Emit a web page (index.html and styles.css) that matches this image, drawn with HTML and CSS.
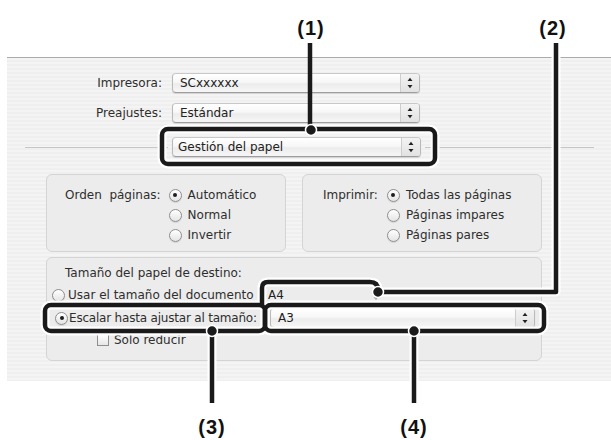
FILE: index.html
```html
<!DOCTYPE html>
<html lang="es">
<head>
<meta charset="utf-8">
<title>Gestión del papel</title>
<link rel="stylesheet" href="styles.css">
</head>
<body>
<div class="page">
  <div class="top-space"></div>
  <div class="panel">
    <div class="form-row">
      <span class="form-label">Impresora:</span>
      <div class="popup w248"><span class="popup-text">SCxxxxxx</span><span class="stepper"><svg width="6" height="12" viewBox="0 0 6 12"><path d="M0.5 4 L3 0.8 L5.5 4 Z M0.5 8 L5.5 8 L3 11.2 Z" fill="#222"/></svg></span></div>
    </div>
    <div class="form-row">
      <span class="form-label">Preajustes:</span>
      <div class="popup w248"><span class="popup-text">Estándar</span><span class="stepper"><svg width="6" height="12" viewBox="0 0 6 12"><path d="M0.5 4 L3 0.8 L5.5 4 Z M0.5 8 L5.5 8 L3 11.2 Z" fill="#222"/></svg></span></div>
    </div>
    <div class="sep-row">
      <span class="sep-line sep-left"></span>
      <div class="popup w249"><span class="popup-text tight">Gestión del papel</span><span class="stepper"><svg width="6" height="12" viewBox="0 0 6 12"><path d="M0.5 4 L3 0.8 L5.5 4 Z M0.5 8 L5.5 8 L3 11.2 Z" fill="#222"/></svg></span></div>
      <span class="sep-line sep-right"></span>
    </div>

    <div class="boxes">
      <div class="group grp-order">
        <span class="grp-label">Orden&nbsp; páginas:</span>
        <div class="opts">
          <div class="opt"><span class="radio on"></span><span>Automático</span></div>
          <div class="opt"><span class="radio"></span><span>Normal</span></div>
          <div class="opt"><span class="radio"></span><span>Invertir</span></div>
        </div>
      </div>
      <div class="group grp-print">
        <span class="grp-label">Imprimir:</span>
        <div class="opts">
          <div class="opt"><span class="radio on"></span><span>Todas las páginas</span></div>
          <div class="opt"><span class="radio"></span><span>Páginas impares</span></div>
          <div class="opt"><span class="radio"></span><span>Páginas pares</span></div>
        </div>
      </div>
    </div>

    <div class="group grp-size">
      <div class="size-title">Tamaño del papel de destino:</div>
      <div class="size-row row-usar">
        <span class="radio"></span>
        <span class="size-label lbl-usar">Usar el tamaño del documento</span>
        <div class="popup-flat"><span class="popup-text small">A4</span><span class="stepper faint"><svg width="6" height="12" viewBox="0 0 6 12"><path d="M0.5 4 L3 0.8 L5.5 4 Z M0.5 8 L5.5 8 L3 11.2 Z" fill="#aaa"/></svg></span></div>
      </div>
      <div class="size-row row-escalar">
        <span class="radio on"></span>
        <span class="size-label lbl-escalar">Escalar hasta ajustar al tamaño:</span>
        <div class="popup w265"><span class="popup-text">A3</span><span class="stepper"><svg width="6" height="12" viewBox="0 0 6 12"><path d="M0.5 4 L3 0.8 L5.5 4 Z M0.5 8 L5.5 8 L3 11.2 Z" fill="#222"/></svg></span></div>
      </div>
      <div class="size-row row-solo">
        <span class="check"></span>
        <span>Solo reducir</span>
      </div>
    </div>
  </div>

  <svg class="callouts" width="611" height="440" viewBox="0 0 611 440">
    <g fill="none" stroke="#fff" stroke-width="9" stroke-linejoin="round">
      <rect x="162" y="129" width="273" height="35" rx="6"/>
      <path d="M556 43 V292 H378"/>
      <path d="M262 305 V288 Q262 282 268 282 H370 Q378 282 378 290"/>
      <rect x="45" y="305" width="220" height="26" rx="6"/>
      <rect x="265" y="305" width="279" height="26" rx="6"/>
      <path d="M212 331 V403"/>
      <path d="M414 331 V403"/>
    </g>
    <g fill="none" stroke="#1a1a1a" stroke-width="4.5" stroke-linejoin="round">
      <path d="M310 43 V129"/>
      <rect x="162" y="129" width="273" height="35" rx="6"/>
      <path d="M556 43 V292 H378"/>
      <path d="M262 305 V288 Q262 282 268 282 H370 Q378 282 378 290"/>
      <rect x="45" y="305" width="220" height="26" rx="6"/>
      <rect x="265" y="305" width="279" height="26" rx="6"/>
      <path d="M212 331 V403"/>
      <path d="M414 331 V403"/>
    </g>
    <g fill="#1a1a1a" stroke="#fff" stroke-width="1.5">
      <circle cx="311" cy="130" r="5.5"/>
      <circle cx="378" cy="292" r="5.5"/>
      <circle cx="212" cy="331" r="5.5"/>
      <circle cx="414" cy="331" r="5.5"/>
    </g>
  </svg>
  <span class="num n1">(1)</span>
  <span class="num n2">(2)</span>
  <span class="num n3">(3)</span>
  <span class="num n4">(4)</span>
</div>
</body>
</html>
```

FILE: styles.css
```css
html, body {
  margin: 0;
  padding: 0;
  background: #fff;
}

.page {
  position: relative;
  width: 611px;
  height: 440px;
  overflow: hidden;
  font-family: "DejaVu Sans", "Noto Sans", sans-serif;
  font-size: 12px;
  color: #2e2e2e;
}

.top-space {
  height: 57px;
}

.panel {
  margin-left: 7px;
  height: 324px;
  box-sizing: border-box;
  border-top: 1px solid #ababab;
  background: repeating-linear-gradient(to bottom, #f4f4f4 0, #f4f4f4 2px, #efefef 2px, #efefef 4px);
  padding-top: 15px;
  display: flex;
  flex-direction: column;
}

.form-row {
  display: flex;
  align-items: center;
  height: 20px;
  margin-bottom: 10px;
}

.form-label {
  width: 155px;
  text-align: right;
  margin-right: 10px;
  line-height: 20px;
}

.popup {
  display: flex;
  align-items: center;
  height: 20px;
  box-sizing: border-box;
  border: 1px solid #b9b9b9;
  border-top-color: #c8c8c8;
  border-bottom-color: #9d9d9d;
  border-radius: 4px;
  background: linear-gradient(to bottom, #ffffff 0%, #f7f7f7 45%, #ececec 55%, #f6f6f6 100%);
  box-shadow: 0 1px 1px rgba(0, 0, 0, 0.12);
}

.w248 { width: 248px; }
.w249 { width: 249px; }
.w265 { width: 265px; }

.popup-text {
  flex: 1;
  padding-left: 7px;
  line-height: 18px;
  color: #222;
}

.popup-text.tight { padding-left: 5px; }
.popup-text.small { padding-left: 3px; }

.stepper {
  width: 19px;
  height: 18px;
  box-sizing: border-box;
  border-left: 1px solid #cdcdcd;
  border-radius: 0 3px 3px 0;
  background: linear-gradient(to bottom, #f3f3f3, #e2e2e2);
  display: flex;
  align-items: center;
  justify-content: center;
}

.stepper.faint {
  background: transparent;
  border-left: none;
  width: 14px;
}

.sep-row {
  display: flex;
  align-items: center;
  height: 20px;
  padding-left: 18px;
  padding-right: 17px;
  margin-top: 4px;
}

.sep-line {
  height: 1px;
  background: #c6c6c6;
}

.sep-left {
  width: 143px;
  margin-right: 4px;
}

.sep-right {
  flex: 1;
  margin-left: 4px;
}

.boxes {
  display: flex;
  gap: 16px;
  margin-top: 17px;
  padding-left: 39px;
}

.group {
  box-sizing: border-box;
  border: 1px solid #d4d4d4;
  border-radius: 6px;
  background: #ececec;
}

.grp-order,
.grp-print {
  width: 240px;
  height: 78px;
  display: flex;
  align-items: flex-start;
  padding-top: 10px;
}

.grp-order { padding-left: 18px; }
.grp-print { padding-left: 20px; }

.grp-label {
  line-height: 20px;
  margin-right: 8px;
}

.grp-print .grp-label { margin-right: 9px; }

.opts {
  display: flex;
  flex-direction: column;
}

.opt {
  display: flex;
  align-items: center;
  gap: 6px;
  height: 20px;
}

.radio {
  width: 13px;
  height: 13px;
  flex: 0 0 13px;
  box-sizing: border-box;
  border: 1px solid #8e8e8e;
  border-radius: 50%;
  background: linear-gradient(to bottom, #ffffff, #e4e4e4);
  box-shadow: 0 1px 1px rgba(0, 0, 0, 0.1);
  display: grid;
  place-items: center;
}

.radio.on::after {
  content: "";
  width: 4px;
  height: 4px;
  border-radius: 50%;
  background: #1e1e1e;
}

.check {
  width: 12px;
  height: 12px;
  box-sizing: border-box;
  border: 1px solid #8e8e8e;
  background: linear-gradient(to bottom, #ffffff, #e6e6e6);
}

.grp-size {
  width: 496px;
  height: 104px;
  margin-top: 5px;
  margin-left: 39px;
  padding-top: 5px;
  display: flex;
  flex-direction: column;
}

.size-title {
  height: 20px;
  line-height: 20px;
  padding-left: 18px;
}

.size-row {
  display: flex;
  align-items: center;
}

.row-usar {
  height: 24px;
  padding-left: 5px;
  gap: 3px;
}

.lbl-usar {
  flex: 0 0 194px;
  white-space: nowrap;
}

.popup-flat {
  display: flex;
  align-items: center;
  width: 118px;
  height: 18px;
}

.row-escalar {
  height: 22px;
  padding-left: 8px;
  gap: 1px;
}

.lbl-escalar {
  flex: 0 0 200px;
  white-space: nowrap;
  letter-spacing: -0.2px;
}

.row-solo {
  height: 22px;
  padding-left: 50px;
  gap: 5px;
}

.callouts {
  position: absolute;
  left: 0;
  top: 0;
  pointer-events: none;
}

.num {
  position: absolute;
  transform: translateX(-50%);
  font-family: "Liberation Sans", Arial, sans-serif;
  font-weight: bold;
  font-size: 20px;
  line-height: 20px;
  color: #111;
  letter-spacing: 1px;
}

.n1 { left: 311px; top: 18px; }
.n2 { left: 553px; top: 18px; }
.n3 { left: 212px; top: 417px; }
.n4 { left: 414px; top: 417px; }
```
